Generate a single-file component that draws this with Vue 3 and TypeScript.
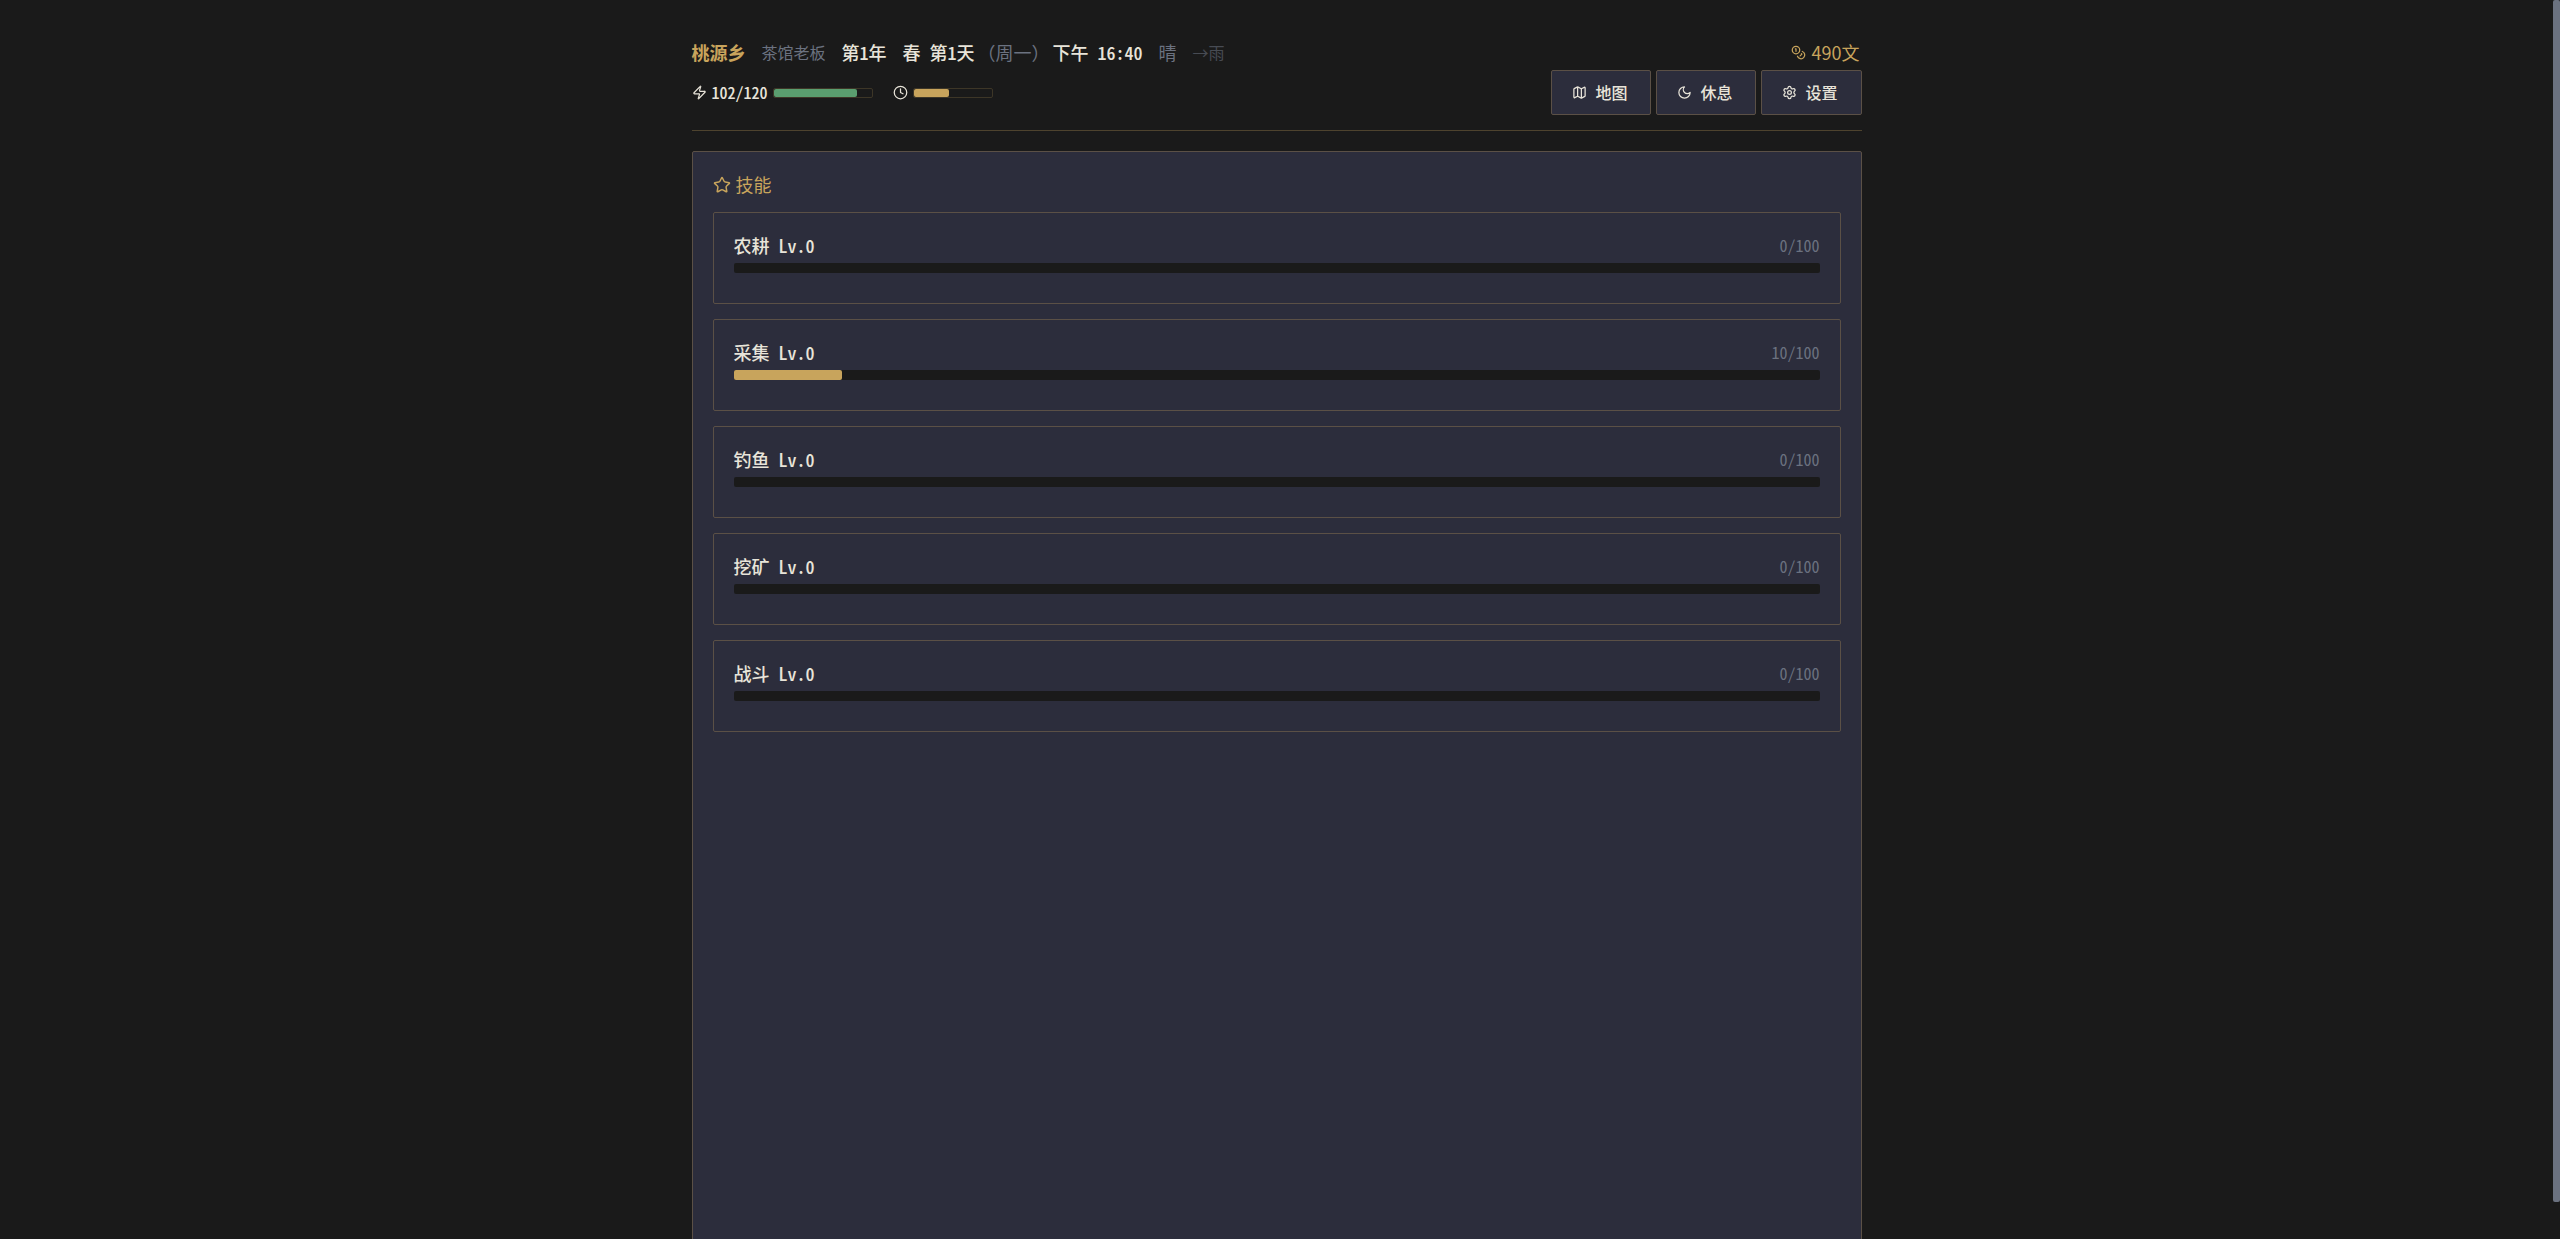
<script setup lang="ts">
interface Skill {
  name: string
  level: number
  exp: number
  need: number
}

const skills: Skill[] = [
  { name: '农耕', level: 0, exp: 0, need: 100 },
  { name: '采集', level: 0, exp: 10, need: 100 },
  { name: '钓鱼', level: 0, exp: 0, need: 100 },
  { name: '挖矿', level: 0, exp: 0, need: 100 },
  { name: '战斗', level: 0, exp: 0, need: 100 },
]

const stamina = { now: 102, max: 120 }
const dayProgress = 46
</script>

<template>
  <div class="page">
    <div class="content">
      <div class="shell">
        <header class="status">
          <div class="row info">
            <h1 class="title">桃源乡</h1>
            <span class="muted small">茶馆老板</span>
            <span class="strong">第1年</span>
            <span class="strong">春 第1天</span>
            <span class="muted weekday">（周一）</span>
            <span class="strong">下午 16:40</span>
            <span class="muted">晴</span>
            <span class="faint small">→雨</span>
            <span class="money">
              <svg class="icon" viewBox="0 0 24 24" aria-hidden="true">
                <circle cx="8" cy="8" r="6" />
                <path d="M18.09 10.37A6 6 0 1 1 10.34 18" />
                <path d="M7 6h1v4" />
                <path d="m16.71 13.88.7.71-2.82 2.82" />
              </svg>
              490文
            </span>
          </div>
          <div class="row gauges">
            <div class="gauge">
              <svg class="icon" viewBox="0 0 24 24" aria-hidden="true">
                <path d="M4 14a1 1 0 0 1-.78-1.63l9.9-10.2a.5.5 0 0 1 .86.46l-1.92 6.02A1 1 0 0 0 13 10h7a1 1 0 0 1 .78 1.63l-9.9 10.2a.5.5 0 0 1-.86-.46l1.92-6.02A1 1 0 0 0 11 14z" />
              </svg>
              <span class="strong small">{{ stamina.now }}/{{ stamina.max }}</span>
              <div class="meter meter-long">
                <div class="fill green" :style="{ width: (stamina.now / stamina.max) * 100 + '%' }"></div>
              </div>
            </div>
            <div class="gauge">
              <svg class="icon" viewBox="0 0 24 24" aria-hidden="true">
                <circle cx="12" cy="12" r="10" />
                <path d="M12 6v6l4 2" />
              </svg>
              <div class="meter">
                <div class="fill gold" :style="{ width: dayProgress + '%' }"></div>
              </div>
            </div>
            <nav class="actions">
              <button type="button" class="btn">
                <svg class="icon" viewBox="0 0 24 24" aria-hidden="true">
                  <path d="M14.106 5.553a2 2 0 0 0 1.788 0l3.659-1.83A1 1 0 0 1 21 4.619v12.764a1 1 0 0 1-.553.894l-4.553 2.277a2 2 0 0 1-1.788 0l-4.212-2.106a2 2 0 0 0-1.788 0l-3.659 1.83A1 1 0 0 1 3 19.381V6.618a1 1 0 0 1 .553-.894l4.553-2.277a2 2 0 0 1 1.788 0z" />
                  <path d="M15 5.764v15" />
                  <path d="M9 3.236v15" />
                </svg>
                地图
              </button>
              <button type="button" class="btn">
                <svg class="icon" viewBox="0 0 24 24" aria-hidden="true">
                  <path d="M12 3a6 6 0 0 0 9 9 9 9 0 1 1-9-9Z" />
                </svg>
                休息
              </button>
              <button type="button" class="btn">
                <svg class="icon" viewBox="0 0 24 24" aria-hidden="true">
                  <path d="M9.671 4.136a2.34 2.34 0 0 1 4.659 0 2.34 2.34 0 0 0 3.319 1.915 2.34 2.34 0 0 1 2.33 4.033 2.34 2.34 0 0 0 0 3.831 2.34 2.34 0 0 1-2.33 4.033 2.34 2.34 0 0 0-3.319 1.915 2.34 2.34 0 0 1-4.659 0 2.34 2.34 0 0 0-3.32-1.915 2.34 2.34 0 0 1-2.33-4.033 2.34 2.34 0 0 0 0-3.831A2.34 2.34 0 0 1 6.35 6.051a2.34 2.34 0 0 0 3.319-1.915" />
                  <circle cx="12" cy="12" r="3" />
                </svg>
                设置
              </button>
            </nav>
          </div>
        </header>

        <main class="panel">
          <h2 class="panel-title">
            <svg class="icon icon-large" viewBox="0 0 24 24" aria-hidden="true">
              <path d="M11.525 2.295a.53.53 0 0 1 .95 0l2.31 4.679a2.123 2.123 0 0 0 1.595 1.16l5.166.756a.53.53 0 0 1 .294.904l-3.736 3.638a2.123 2.123 0 0 0-.611 1.878l.882 5.14a.53.53 0 0 1-.771.56l-4.618-2.428a2.122 2.122 0 0 0-1.973 0L6.396 21.01a.53.53 0 0 1-.77-.56l.881-5.139a2.122 2.122 0 0 0-.611-1.879L2.16 9.795a.53.53 0 0 1 .294-.906l5.165-.755a2.122 2.122 0 0 0 1.597-1.16z" />
            </svg>
            技能
          </h2>
          <ul class="skills">
            <li v-for="skill in skills" :key="skill.name" class="skill">
              <div class="skill-head">
                <span class="strong">{{ skill.name }} Lv.{{ skill.level }}</span>
                <span class="muted small">{{ skill.exp }}/{{ skill.need }}</span>
              </div>
              <div class="track">
                <div class="fill gold" :style="{ width: (skill.exp / skill.need) * 100 + '%' }"></div>
              </div>
            </li>
          </ul>
        </main>
      </div>
    </div>
    <div class="scrollbar" aria-hidden="true">
      <div class="thumb"></div>
    </div>
  </div>
</template>

<style>
html,
body,
#app {
  height: 100%;
}

body {
  background: #1a1a1a;
  overflow: hidden;
}
</style>

<style scoped>
.page {
  display: flex;
  height: 100%;
  background: #1a1a1a;
  color: #e8e4d9;
  font-family: "Noto Sans CJK SC", "Noto Sans", sans-serif;
  font-feature-settings: "hwid";
  font-size: 18px;
  line-height: 25px;
}

.content {
  flex: 1;
  min-width: 0;
  overflow-y: auto;
  scrollbar-width: none;
}

.scrollbar {
  flex: none;
  width: 7px;
}

.thumb {
  height: 97%;
  border-radius: 2px;
  background: #6b7280;
}

.shell {
  box-sizing: border-box;
  display: flex;
  flex-direction: column;
  max-width: 1210px;
  min-height: calc(100% + 40px);
  margin: 0 auto;
  padding: 40px 20px 20px;
}

.status {
  display: flex;
  flex-direction: column;
  gap: 5px;
  padding-bottom: 15px;
  margin-bottom: 20px;
  border-bottom: 1px solid #4e432e;
}

.row {
  display: flex;
  align-items: center;
}

.info {
  gap: 16px;
  white-space: nowrap;
}

.title {
  margin: 0;
  color: #c8a45c;
  font-size: 18px;
  font-weight: 700;
}

.strong {
  font-weight: 500;
}

.small {
  font-size: 16px;
}

.muted {
  color: #6b7280;
}

.faint {
  color: #474b53;
}

.weekday {
  margin: 0 -13px;
  font-feature-settings: normal;
}

.money {
  display: flex;
  align-items: center;
  gap: 6px;
  margin-left: auto;
  padding-right: 2px;
  color: #c8a45c;
  font-feature-settings: normal;
}

.icon {
  flex: none;
  width: 15px;
  height: 15px;
  fill: none;
  stroke: currentColor;
  stroke-width: 2;
  stroke-linecap: round;
  stroke-linejoin: round;
}

.icon-large {
  width: 18px;
  height: 18px;
}

.gauges {
  gap: 20px;
}

.gauge {
  display: flex;
  align-items: center;
  gap: 5px;
}

.meter {
  box-sizing: border-box;
  width: 80px;
  height: 10px;
  border: 1px solid #3d3627;
  border-radius: 2px;
}

.meter-long {
  width: 100px;
}

.fill {
  height: 100%;
  border-radius: 2px;
}

.green {
  background: #5a9e6f;
}

.gold {
  background: #c8a45c;
}

.actions {
  display: flex;
  gap: 5px;
  margin-left: auto;
}

.btn {
  display: flex;
  align-items: center;
  gap: 8px;
  height: 45px;
  padding: 0 23px 0 20px;
  border: 1px solid #5b5046;
  border-radius: 2px;
  background: #2c2d3c;
  color: inherit;
  font: inherit;
  font-size: 16px;
  font-weight: 500;
  cursor: pointer;
}

.panel {
  flex: 1;
  padding: 20px;
  border: 1px solid #5b5046;
  border-radius: 2px;
  background: #2c2d3c;
}

.panel-title {
  display: flex;
  align-items: center;
  gap: 5px;
  margin: 0 0 15px;
  color: #c8a45c;
  font-size: 18px;
  font-weight: 400;
}

.skills {
  display: flex;
  flex-direction: column;
  gap: 15px;
  margin: 0;
  padding: 0;
  list-style: none;
}

.skill {
  padding: 20px 20px 30px;
  border: 1px solid #5b5046;
  border-radius: 2px;
}

.skill-head {
  display: flex;
  align-items: center;
  justify-content: space-between;
  margin-bottom: 5px;
}

.track {
  height: 10px;
  border-radius: 2px;
  background: #1a1a1a;
}
</style>
